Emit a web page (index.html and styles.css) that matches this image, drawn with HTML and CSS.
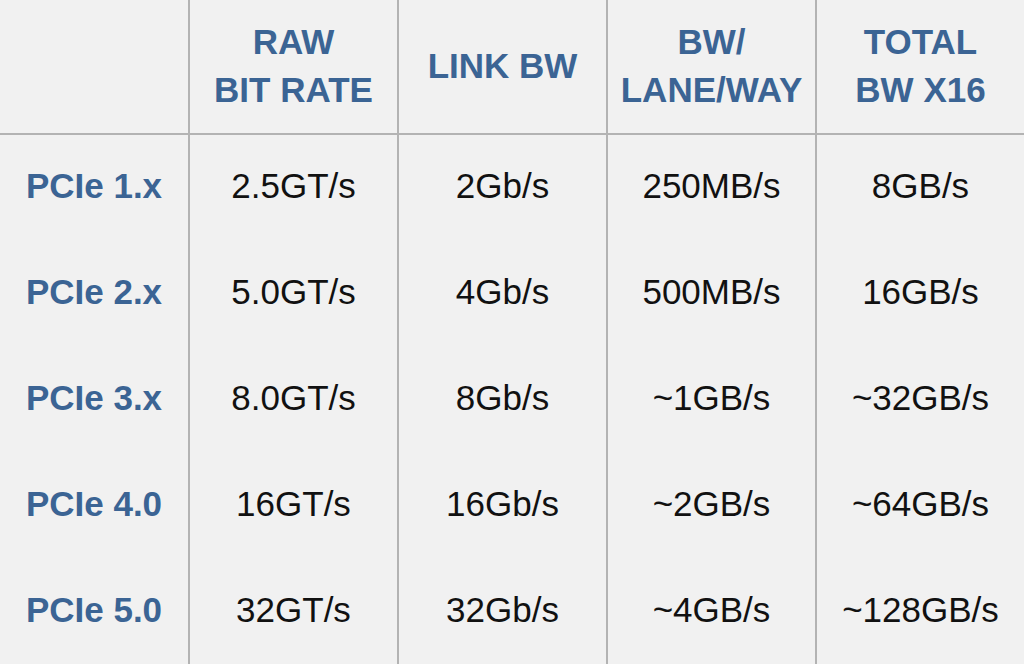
FILE: index.html
```html
<!DOCTYPE html>
<html>
<head>
<meta charset="utf-8">
<link rel="stylesheet" href="styles.css">
</head>
<body>
<div class="table">
  <div class="cell head first"></div>
  <div class="cell head">RAW<br>BIT RATE</div>
  <div class="cell head">LINK BW</div>
  <div class="cell head">BW/<br>LANE/WAY</div>
  <div class="cell head">TOTAL<br>BW X16</div>

  <div class="cell label first">PCIe 1.x</div>
  <div class="cell">2.5GT/s</div>
  <div class="cell">2Gb/s</div>
  <div class="cell">250MB/s</div>
  <div class="cell">8GB/s</div>

  <div class="cell label first">PCIe 2.x</div>
  <div class="cell">5.0GT/s</div>
  <div class="cell">4Gb/s</div>
  <div class="cell">500MB/s</div>
  <div class="cell">16GB/s</div>

  <div class="cell label first">PCIe 3.x</div>
  <div class="cell">8.0GT/s</div>
  <div class="cell">8Gb/s</div>
  <div class="cell">~1GB/s</div>
  <div class="cell">~32GB/s</div>

  <div class="cell label first">PCIe 4.0</div>
  <div class="cell">16GT/s</div>
  <div class="cell">16Gb/s</div>
  <div class="cell">~2GB/s</div>
  <div class="cell">~64GB/s</div>

  <div class="cell label first">PCIe 5.0</div>
  <div class="cell">32GT/s</div>
  <div class="cell">32Gb/s</div>
  <div class="cell">~4GB/s</div>
  <div class="cell">~128GB/s</div>
</div>
</body>
</html>
```

FILE: styles.css
```css
html, body {
  margin: 0;
  padding: 0;
  background: #f1f1f1;
}

body {
  width: 1024px;
  height: 664px;
  overflow: hidden;
  font-family: "Liberation Sans", Arial, sans-serif;
}

.table {
  display: grid;
  grid-template-columns: 188px 209px 209px 209px 209px;
  grid-template-rows: 135px repeat(5, 106px);
  width: 1024px;
}

.cell {
  display: flex;
  align-items: center;
  justify-content: center;
  text-align: center;
  border-left: 2px solid #b3b3b3;
  color: #111;
  font-size: 35px;
  line-height: 35px;
  padding-bottom: 6px;
  box-sizing: border-box;
}

.cell.first {
  border-left: none;
}

.head {
  color: #3b6494;
  font-weight: bold;
  line-height: 48px;
  padding-bottom: 2px;
  border-bottom: 2px solid #b3b3b3;
}

.label {
  color: #3b6494;
  font-weight: bold;
}
```
